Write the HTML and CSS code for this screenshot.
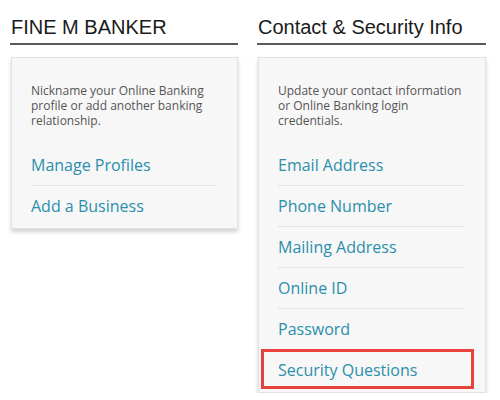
FILE: index.html
```html
<!DOCTYPE html>
<html lang="en">
<head>
  <meta charset="UTF-8" />
  <meta name="viewport" content="width=device-width, initial-scale=1" />
  <title>Profile & Settings</title>
  <link rel="stylesheet" href="styles.css">
</head>
<body>

  <div class="columns">
    <!-- Profiles -->
    <section class="col">
      <h2>FINE M BANKER</h2>
      <div class="card">
        <p>Nickname your Online Banking profile or add another banking relationship.</p>
        <ul class="links">
          <li><a href="#">Manage Profiles</a></li>
          <li><a href="#">Add a Business</a></li>
        </ul>
      </div>
    </section>

    <!-- Contact & Security -->
    <section class="col">
      <h2>Contact &amp; Security Info</h2>
      <div class="card">
        <p>Update your contact information or Online Banking login credentials.</p>
        <ul class="links">
          <li><a href="#">Email Address</a></li>
          <li><a href="#">Phone Number</a></li>
          <li><a href="#">Mailing Address</a></li>
          <li><a href="#">Online ID</a></li>
          <li><a href="#">Password</a></li>
          <li class="highlight"><a href="#">Security Questions</a></li>
        </ul>
      </div>
    </section>
  </div>

</body>
</html>
```

FILE: styles.css
```css
/* Basic Reset */
* {
  box-sizing: border-box;
}

body {
  margin: 0;
  padding: 0 14px 0 10px;
  background: #fff;
  font-family: "Open Sans", sans-serif;
}

.columns {
  display: grid;
  grid-template-columns: 228px 229px;
  gap: 19px;
}

h2 {
  font-family: "Liberation Sans", Arial, sans-serif;
  font-weight: normal;
  font-size: 20px;
  color: #1a1a1a;
  margin: 0;
  padding: 16px 0 5px 1px;
  line-height: 22px;
  border-bottom: 2px solid #5a5a5a;
}

.card {
  margin: 12px 0 0 1px;
  background: #f7f7f7;
  border: 1px solid #e2e2e2;
  box-shadow: 0 3px 4px rgba(0, 0, 0, 0.18);
  padding: 25px 20px 2px 19px;
}

.card p {
  margin: 0 0 17px;
  font-size: 12px;
  line-height: 15px;
  color: #555;
}

/* Link list */
.links {
  list-style-type: none;
  margin: 0;
  padding: 0;
}

.links li {
  padding: 9px 0;
  border-bottom: 1px solid #e3e3e3;
  line-height: 22px;
}

.links li:last-child {
  border-bottom: none;
}

.links a {
  color: #2b8fab;
  font-size: 16px;
  text-decoration: none;
}

.highlight {
  position: relative;
}

.highlight::after {
  content: "";
  position: absolute;
  top: -1px;
  bottom: 1px;
  left: -17px;
  right: -9px;
  border: 3px solid #e8423d;
}
```
